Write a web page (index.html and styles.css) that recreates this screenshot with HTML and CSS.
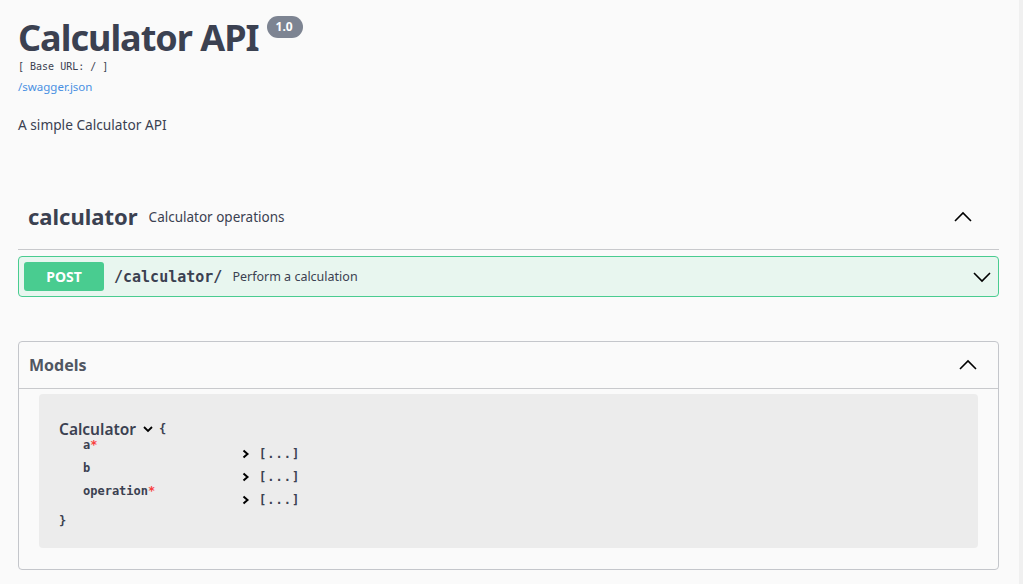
FILE: index.html
```html
<!DOCTYPE html>
<html>
<head>
<meta charset="utf-8">
<title>Calculator API</title>
<link rel="stylesheet" href="styles.css">
</head>
<body>
<div class="page">
  <div class="info">
    <div class="title-row">
      <h2 class="title">Calculator API</h2>
      <span class="version">1.0</span>
    </div>
    <div class="base-url">[ Base URL: / ]</div>
    <a class="spec-link" href="#">/swagger.json</a>
    <p class="desc">A simple Calculator API</p>
  </div>

  <div class="tag">
    <div class="tag-header">
      <span class="tag-name">calculator</span>
      <span class="tag-desc">Calculator operations</span>
      <svg class="arrow" width="20" height="20" viewBox="0 0 20 20"><path d="M2 14 L10 6 L18 14" fill="none" stroke="#000" stroke-width="1.6"/></svg>
    </div>
    <div class="opblock">
      <span class="method">POST</span>
      <span class="path">/calculator/</span>
      <span class="summary">Perform a calculation</span>
      <svg class="arrow" width="20" height="20" viewBox="0 0 20 20"><path d="M2 6 L10 14 L18 6" fill="none" stroke="#000" stroke-width="1.6"/></svg>
    </div>
  </div>

  <section class="models">
    <div class="models-header">
      <span>Models</span>
      <svg class="arrow" width="20" height="20" viewBox="0 0 20 20"><path d="M2 14 L10 6 L18 14" fill="none" stroke="#000" stroke-width="1.6"/></svg>
    </div>
    <div class="model-box">
      <div class="model-title">
        <span class="model-name">Calculator</span>
        <svg class="small-arrow" width="12" height="12" viewBox="0 0 12 12"><path d="M2 4 L6 8 L10 4" fill="none" stroke="#000" stroke-width="1.8"/></svg>
        <span class="brace">{</span>
      </div>
      <table class="props">
        <tr><td class="pname">a<span class="req">*</span></td><td class="pval"><svg class="chev" width="8" height="10" viewBox="0 0 8 10"><path d="M1.5 1.5 L5.5 5 L1.5 8.5" fill="none" stroke="#000" stroke-width="2"/></svg><span class="br">[...]</span></td></tr>
        <tr><td class="pname">b</td><td class="pval"><svg class="chev" width="8" height="10" viewBox="0 0 8 10"><path d="M1.5 1.5 L5.5 5 L1.5 8.5" fill="none" stroke="#000" stroke-width="2"/></svg><span class="br">[...]</span></td></tr>
        <tr><td class="pname">operation<span class="req">*</span></td><td class="pval"><svg class="chev" width="8" height="10" viewBox="0 0 8 10"><path d="M1.5 1.5 L5.5 5 L1.5 8.5" fill="none" stroke="#000" stroke-width="2"/></svg><span class="br">[...]</span></td></tr>
      </table>
      <div class="brace close">}</div>
    </div>
  </section>
</div>
</body>
</html>
```

FILE: styles.css
```css
html {
  background: #f0f0f0;
}
body {
  margin: 0;
  font-family: "Noto Sans", "Open Sans", sans-serif;
  color: #3b4151;
}
.page {
  width: 1019px;
  min-height: 584px;
  background: #fafafa;
  box-sizing: border-box;
  padding: 0 20px 0 18px;
}
.info {
  padding-top: 14px;
}
.title-row {
  display: flex;
  align-items: flex-start;
}
.title {
  margin: 0;
  font-size: 36px;
  font-weight: 700;
  line-height: 48px;
  letter-spacing: -1px;
}
.version {
  margin-left: 8px;
  margin-top: 2px;
  background: #7d8492;
  color: #fff;
  font-size: 12px;
  font-weight: 700;
  border-radius: 11px;
  padding: 2px 10px 2px 9px;
  line-height: 18px;
}
.base-url {
  font-family: "DejaVu Sans Mono", monospace;
  font-size: 10px;
  line-height: 14px;
  margin-top: -2px;
}
.spec-link {
  display: inline-block;
  margin-top: 5px;
  font-size: 11.5px;
  color: #4990e2;
  text-decoration: none;
  line-height: 16px;
}
.desc {
  margin: 19px 0 0;
  font-size: 13.7px;
  line-height: 20px;
}
.tag {
  margin-top: 65px;
}
.tag-header {
  display: flex;
  align-items: center;
  padding: 2px 26px 18px 10px;
  border-bottom: 1px solid #c8c9cc;
  height: 29px;
}
.tag-name {
  font-size: 22px;
  font-weight: 700;
  line-height: 29px;
}
.tag-desc {
  font-size: 13.5px;
  margin-left: 11px;
  flex: 1;
}
.arrow {
  display: block;
}
.opblock {
  margin-top: 6px;
  display: flex;
  align-items: center;
  height: 41px;
  box-sizing: border-box;
  padding: 0 6px 0 5px;
  background: #e8f6ef;
  border: 1px solid #49cc90;
  border-radius: 4px;
}
.method {
  width: 80px;
  height: 29px;
  background: #49cc90;
  color: #fff;
  border-radius: 3px;
  font-size: 14px;
  font-weight: 700;
  display: flex;
  align-items: center;
  justify-content: center;
}
.path {
  font-family: "DejaVu Sans Mono", monospace;
  font-size: 15px;
  margin-left: 10px;
  font-weight: 600;
}
.summary {
  font-size: 12.5px;
  margin-left: 10px;
  flex: 1;
}
.models {
  margin-top: 44px;
  border: 1px solid #c4c6cb;
  border-radius: 4px;
  padding-bottom: 21px;
}
.models-header {
  display: flex;
  align-items: center;
  justify-content: space-between;
  height: 46px;
  padding: 0 20px 0 10px;
  border-bottom: 1px solid #c8c9cc;
  font-size: 16px;
  font-weight: 700;
  color: #505661;
}
.model-box {
  margin: 5px 20px 0;
  background: #ececec;
  border-radius: 4px;
  padding: 26px 20px 18px;
  height: 154px;
  box-sizing: border-box;
}
.model-title {
  display: flex;
  align-items: center;
  line-height: 18px;
}
.model-name {
  font-size: 15.5px;
  font-weight: 600;
}
.small-arrow {
  margin-left: 6px;
}
.brace {
  font-family: "DejaVu Sans Mono", monospace;
  font-size: 12px;
  font-weight: 700;
  margin-left: 5px;
}
.brace.close {
  margin-left: 0;
  margin-top: 7px;
}
.props {
  border-collapse: collapse;
  margin-left: 24px;
  margin-top: 0;
  font-family: "DejaVu Sans Mono", monospace;
  font-size: 12px;
}
.props td {
  padding: 0;
  height: 23px;
}
.pname {
  width: 159px;
  vertical-align: top;
  font-weight: 700;
  line-height: 14px;
}
.pval {
  vertical-align: bottom;
  line-height: 14px;
  padding-bottom: 0;
}
.req {
  color: #f93e3e;
}
.chev {
  display: inline-block;
  vertical-align: -1px;
  margin-right: 9px;
}
.br {
  font-weight: 700;
  letter-spacing: 1px;
}
```
